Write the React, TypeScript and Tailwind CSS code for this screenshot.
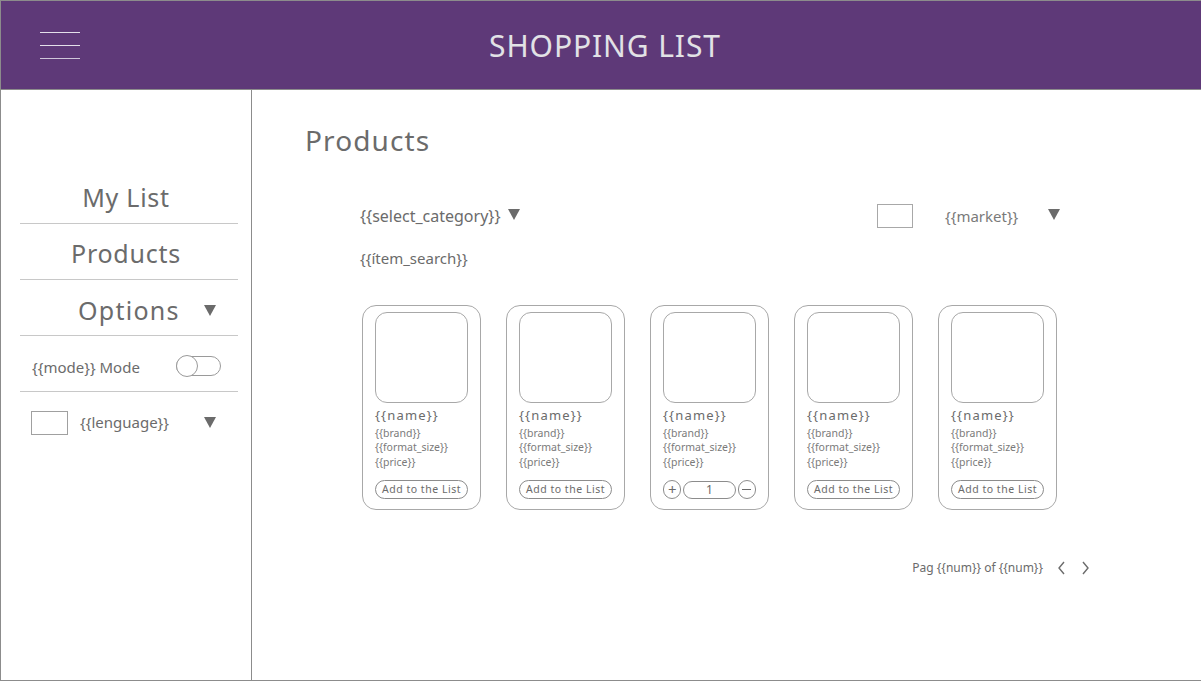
import React from 'react';

const font = { fontFamily: '"Noto Sans", "Open Sans", sans-serif' };

const Caret: React.FC<{ className?: string }> = ({ className = '' }) => (
  <svg width="12" height="11" viewBox="0 0 12 11" className={className}>
    <polygon points="0,0 12,0 6,11" fill="#6b6b6b" />
  </svg>
);

const Chevron: React.FC<{ dir: 'left' | 'right' }> = ({ dir }) => (
  <svg width="9" height="14" viewBox="0 0 9 14">
    <polyline
      points={dir === 'left' ? '7,1 2,7 7,13' : '2,1 7,7 2,13'}
      fill="none"
      stroke="#6b6b6b"
      strokeWidth="1.4"
    />
  </svg>
);

const SideItem: React.FC<{ label: string }> = ({ label }) => (
  <div className="h-[56px] border-b border-[#c8c8c8] flex items-center justify-center pt-[4px] pr-[6px]">
    <span className="text-[25px] text-[#6b6b6b] tracking-[0.03em] leading-none">{label}</span>
  </div>
);

const Sidebar: React.FC = () => (
  <aside className="w-[251px] shrink-0 border-r border-[#8c8c8c] pt-[78px] pl-[19px] pr-[13px]">
    <SideItem label="My List" />
    <SideItem label="Products" />
    <div className="h-[56px] border-b border-[#c8c8c8] flex items-center pl-[58px] pr-[22px] pt-[5px]">
      <span className="text-[25px] text-[#6b6b6b] tracking-[0.05em] leading-none">Options</span>
      <Caret className="ml-auto" />
    </div>
    <div className="h-[56px] border-b border-[#c8c8c8] flex items-center pl-[12px] pr-[17px] pt-[7px]">
      <span className="text-[15px] text-[#6b6b6b]">{'{{mode}} Mode'}</span>
      <div className="ml-auto w-[45px] h-[20px] rounded-full border border-[#9a9a9a] flex items-center -mt-[2px]">
        <div className="w-[22px] h-[22px] -ml-px rounded-full border border-[#9a9a9a] bg-white" />
      </div>
    </div>
    <div className="h-[56px] flex items-center pl-[11px] pr-[22px] pt-[5px]">
      <div className="w-[37px] h-[24px] border border-[#a0a0a0]" />
      <span className="ml-[12px] text-[15px] text-[#6b6b6b]">{'{{lenguage}}'}</span>
      <Caret className="ml-auto" />
    </div>
  </aside>
);

const Card: React.FC<{ counter?: boolean }> = ({ counter }) => (
  <div className="w-[119px] h-[205px] rounded-[14px] border border-[#a8a8a8] px-[12px] pt-[6px] flex flex-col">
    <div className="w-[93px] h-[91px] rounded-[12px] border border-[#a8a8a8]" />
    <div className="mt-[4px] text-[13px] leading-[17px] text-[#6b6b6b] tracking-[0.09em]">{'{{name}}'}</div>
    <div className="mt-[2px] text-[10.5px] leading-[14.5px] text-[#7a7a7a]">
      <div>{'{{brand}}'}</div>
      <div>{'{{format_size}}'}</div>
      <div>{'{{price}}'}</div>
    </div>
    {counter ? (
      <div className="mt-[11px] flex items-center gap-[2px]">
        <div className="w-[19px] h-[19px] rounded-full border border-[#8c8c8c] flex items-center justify-center text-[15px] leading-none text-[#6b6b6b]">+</div>
        <div className="w-[54px] h-[18px] rounded-full border border-[#8c8c8c] flex items-center justify-center text-[12px] text-[#6b6b6b]">1</div>
        <div className="w-[19px] h-[19px] rounded-full border border-[#8c8c8c] flex items-center justify-center">
          <div className="w-[9px] h-px bg-[#6b6b6b]" />
        </div>
      </div>
    ) : (
      <div className="mt-[11px] w-[93px] h-[19px] rounded-full border border-[#8c8c8c] flex items-center justify-center text-[10.5px] text-[#6b6b6b] tracking-[0.05em]">
        Add to the List
      </div>
    )}
  </div>
);

const Main: React.FC = () => (
  <main className="flex-1 flex flex-col pl-[53px] pt-[31px]">
    <h1 className="text-[28px] leading-[38px] text-[#6b6b6b] tracking-[0.04em]">Products</h1>
    <div className="ml-[55px] w-[700px] mt-[45px]">
      <div className="flex items-center justify-between h-[24px]">
        <div className="flex items-center">
          <span className="text-[16px] text-[#6b6b6b]">{'{{select_category}}'}</span>
          <Caret className="ml-[8px] -mt-[3px]" />
        </div>
        <div className="w-[183px] flex items-center">
          <div className="w-[36px] h-[24px] border border-[#a8a8a8]" />
          <span className="ml-[32px] text-[15px] text-[#7a7a7a]">{'{{market}}'}</span>
          <Caret className="ml-auto -mt-[4px]" />
        </div>
      </div>
      <div className="mt-[19px] text-[15px] text-[#6b6b6b]">{'{{ítem_search}}'}</div>
      <div className="mt-[35px] ml-[2px] flex gap-[25px]">
        <Card />
        <Card />
        <Card counter />
        <Card />
        <Card />
      </div>
    </div>
    <div className="mt-[49px] mr-[111px] flex items-center justify-end">
      <span className="text-[12px] text-[#6b6b6b]">{'Pag {{num}} of {{num}}'}</span>
      <div className="ml-[14px] flex items-center gap-[15px]">
        <Chevron dir="left" />
        <Chevron dir="right" />
      </div>
    </div>
  </main>
);

export default function App() {
  return (
    <div className="w-[1201px] h-[682px] bg-white overflow-hidden" style={font}>
      <div className="h-[681px] border-t border-l border-b border-[#8c8c8c] flex flex-col">
        <header className="h-[89px] shrink-0 bg-[#5e3978] border-b border-[#8c8c8c] flex items-center">
          <div className="ml-[39px] w-[40px] flex flex-col gap-[12px]">
            <div className="h-px bg-[#e4e0ea]" />
            <div className="h-px bg-[#e4e0ea]" />
            <div className="h-px bg-[#cfc6da]" />
          </div>
          <div className="flex-1 text-center pr-[71px] text-[30px] text-[#e2e2e6] tracking-[0.03em]">
            SHOPPING LIST
          </div>
        </header>
        <div className="flex-1 flex">
          <Sidebar />
          <Main />
        </div>
      </div>
    </div>
  );
}
